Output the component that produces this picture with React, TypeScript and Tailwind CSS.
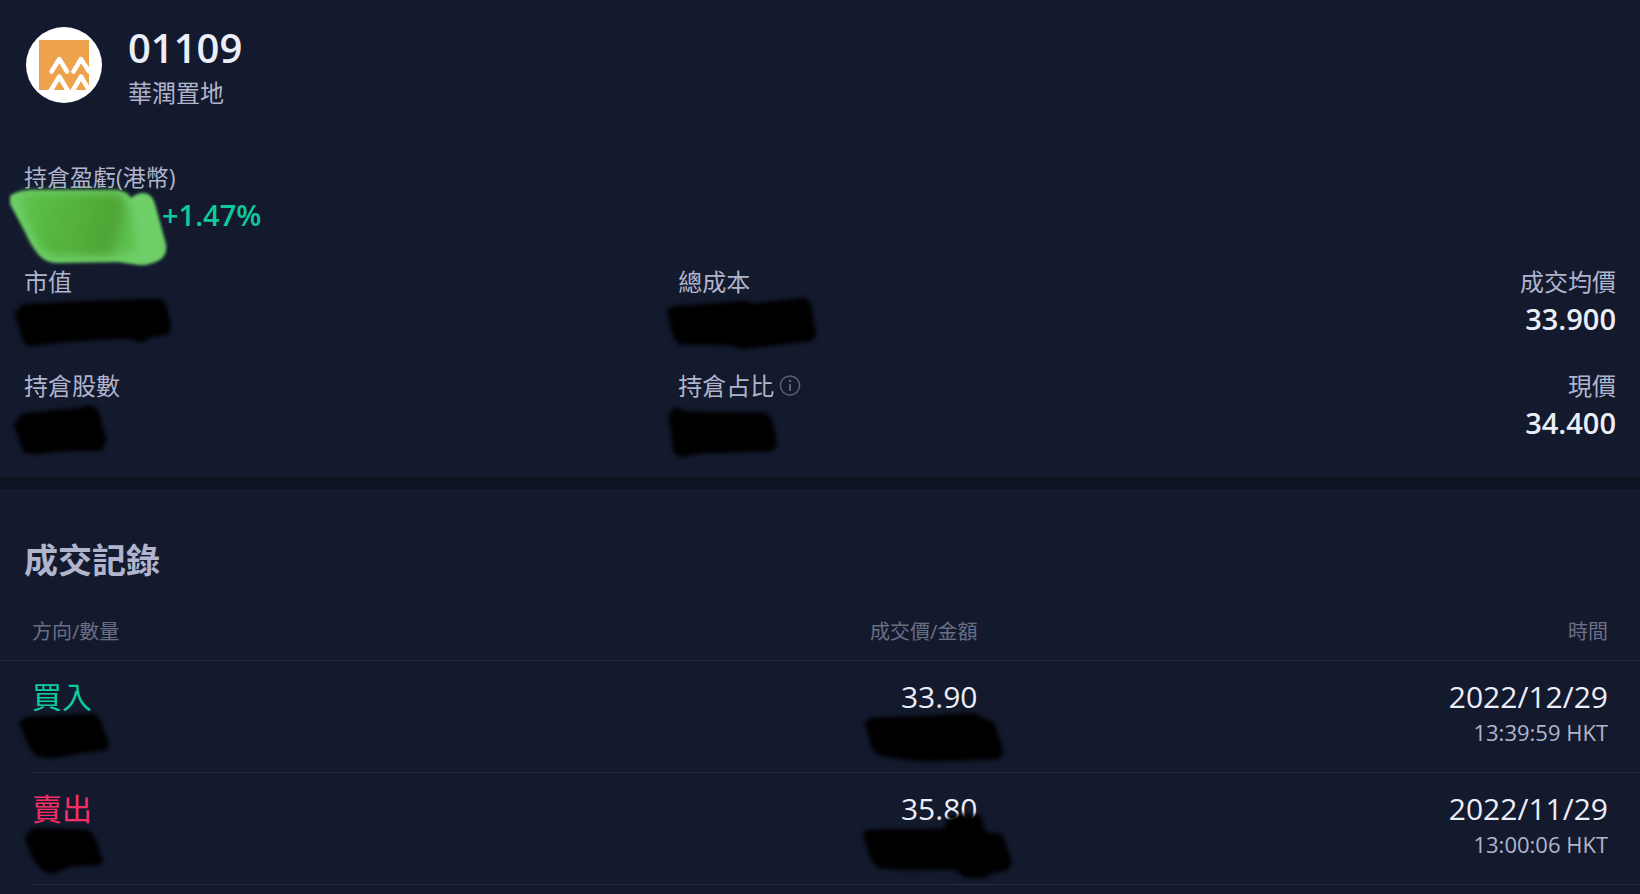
import type { ReactNode } from 'react'

const trades = [
  {
    side: '買入',
    color: 'text-[#0ecb9f]',
    price: '33.90',
    date: '2022/12/29',
    time: '13:39:59 HKT',
    quantityMask: '3,23 12,18 79,15 84,21 93,46 90,51 64,54 36,59 20,57 14,49',
    amountMask: '8,23 14,19 72,17 117,14 127,20 136,23 141,36 146,53 142,60 72,62 52,61 22,56 15,49',
  },
  {
    side: '賣出',
    color: 'text-[#f92e66]',
    price: '35.80',
    date: '2022/11/29',
    time: '13:00:06 HKT',
    quantityMask: '9,27 17,17 72,19 78,25 87,51 82,54 54,55 36,63 26,59 17,47',
    amountMask: '6,22 12,19 87,18 92,6 107,3 124,5 128,21 145,24 155,51 150,59 135,62 127,67 107,66 97,58 47,59 22,57 14,49',
  },
]

// Brush stroke that hides a private value
function Scribble({ points }: { points: string }) {
  return (
    <svg className="absolute -left-4 -top-4 overflow-visible blur-[2px]" width="176" height="72" viewBox="0 0 176 72" aria-hidden="true">
      <polygon points={points} fill="#000" stroke="#000" strokeWidth="1" strokeLinejoin="round" />
    </svg>
  )
}

function GreenScribble() {
  return (
    <svg className="absolute -left-4 -top-4 overflow-visible blur-[1.5px]" width="176" height="90" viewBox="0 0 176 90" aria-hidden="true">
      <defs>
        <linearGradient id="green" x1="0" y1="0" x2="1" y2="0.15">
          <stop offset="0" stopColor="#60c553" />
          <stop offset="0.3" stopColor="#57b942" />
          <stop offset="0.6" stopColor="#53ae3a" />
          <stop offset="0.85" stopColor="#4ea435" />
          <stop offset="1" stopColor="#5cbf4c" />
        </linearGradient>
        <filter id="soft" x="-20%" y="-20%" width="140%" height="140%">
          <feGaussianBlur stdDeviation="4" />
        </filter>
      </defs>
      <path d="M2 17Q8 12 22 11H110Q120 13 123 19Q132 12 140 15Q145 18 147 25L158 65Q160 77 150 82Q140 87 130 86L110 83L52 84Q38 85 30 75Q22 65 17 53L2 25Z" fill="#6ecf69" />
      <path d="M10 18Q16 14 24 14H108Q116 17 120 26L128 62Q128 74 118 75L106 77H48Q36 76 31 67L20 46Z" fill="url(#green)" filter="url(#soft)" />
    </svg>
  )
}

function Logo() {
  return (
    <svg className="mt-1 shrink-0" width="76" height="76" viewBox="0 0 76 76" role="img" aria-label="華潤置地">
      <defs>
        <clipPath id="square">
          <rect x="13" y="13" width="50" height="50" />
        </clipPath>
      </defs>
      <circle cx="38" cy="38" r="38" fill="#fff" />
      <rect x="13" y="13" width="50" height="50" fill="#eda24b" />
      <g clipPath="url(#square)" fill="none" stroke="#fff" strokeWidth="4.5" strokeLinecap="round" strokeLinejoin="round">
        <path d="M25.5 44.5L33.3 32L41 44.5" />
        <path d="M47.5 44.5L55 32L63 44.5" />
        <path d="M24.5 64L33.3 49.5L42 64" />
        <path d="M46.5 64L55 49.5L63.5 64" />
      </g>
    </svg>
  )
}

function InfoIcon() {
  return (
    <svg width="22" height="22" viewBox="0 0 22 22" fill="none" stroke="#5c606f" strokeWidth="1.5" aria-hidden="true">
      <circle cx="11" cy="10.5" r="9.6" />
      <path d="M11 9V16" strokeWidth="2" />
      <circle cx="11" cy="6" r="1.3" fill="#5c606f" stroke="none" />
    </svg>
  )
}

function Stat({ label, children, align = '' }: { label: ReactNode; children: ReactNode; align?: string }) {
  return (
    <div className={align}>
      <dt className="text-2xl leading-9">{label}</dt>
      <dd className="relative h-[38px] text-[29px] leading-[38px] font-semibold text-[#eceef8]">{children}</dd>
    </div>
  )
}

export default function App() {
  return (
    <main className="min-h-screen overflow-hidden bg-[#141a2e] font-['Open_Sans','Noto_Sans_CJK_TC',sans-serif] text-[#b0b4cc]">
      <section className="border-b-12 border-[#0d1321] px-6 pt-[23px] pb-[35px]">
        <header className="flex items-start gap-[26px] pl-0.5">
          <Logo />
          <div>
            <h1 className="text-[40px] leading-[50px] font-semibold text-[#eceef8]">01109</h1>
            <p className="text-2xl leading-10">華潤置地</p>
          </div>
        </header>

        <dl className="mt-[46px]">
          <dt className="text-[23px] leading-9">持倉盈虧(港幣)</dt>
          <dd className="relative h-[38px] pl-[138px] text-[29px] leading-10 font-semibold text-[#0ecb9f]">
            +1.47%
            <GreenScribble />
          </dd>
        </dl>

        <dl className="mt-[31px] grid grid-cols-[41.1%_1fr_auto] gap-y-[30px]">
          <Stat label="市值">
            <Scribble points="7,29 14,21 22,20 92,17 152,15 157,19 163,42 160,50 142,53 134,58 128,57 120,54 52,58 22,62 16,59" />
          </Stat>
          <Stat label="總成本">
            <Scribble points="5,27 10,23 83,17 90,20 143,14 148,18 154,52 148,57 78,65 68,61 18,60 12,54" />
          </Stat>
          <Stat label="成交均價" align="text-right">33.900</Stat>
          <Stat label="持倉股數">
            <Scribble points="6,37 14,26 72,20 82,17 90,22 98,52 94,62 52,63 27,66 16,64" />
          </Stat>
          <Stat
            label={
              <span className="flex items-center gap-[5px]">
                持倉占比
                <button type="button" aria-label="持倉占比說明">
                  <InfoIcon />
                </button>
              </span>
            }
          >
            <Scribble points="7,27 13,19 23,24 103,25 110,32 115,57 110,63 38,65 18,69 12,64" />
          </Stat>
          <Stat label="現價" align="text-right">34.400</Stat>
        </dl>
      </section>

      <section className="pt-[47px]">
        <h2 className="px-6 text-[34px] leading-[48px] font-bold">成交記錄</h2>
        <table className="mt-5 w-full table-fixed border-separate border-spacing-0">
          <thead className="text-xl leading-[56px] text-[#6b6f84]">
            <tr>
              <th className="w-[35%] border-b border-[#252a3e] pl-8 text-left font-normal">方向/數量</th>
              <th className="border-b border-[#252a3e] text-right font-normal">成交價/金額</th>
              <th className="w-[40.4%] border-b border-[#252a3e] pr-8 text-right font-normal">時間</th>
            </tr>
          </thead>
          <tbody className="text-[30px] leading-9 text-[#eceef8]">
            {trades.map((trade) => (
              <tr key={trade.date}>
                <td className="p-0">
                  <div className="ml-8 h-28 border-b border-[#252a3e] pt-[18px]">
                    <div className={trade.color}>{trade.side}</div>
                    <div className="relative h-9">
                      <Scribble points={trade.quantityMask} />
                    </div>
                  </div>
                </td>
                <td className="p-0 text-right">
                  <div className="flex h-28 flex-col items-end border-b border-[#252a3e] pt-[18px]">
                    <div>{trade.price}</div>
                    <div className="relative h-9 w-[104px]">
                      <Scribble points={trade.amountMask} />
                    </div>
                  </div>
                </td>
                <td className="p-0 text-right">
                  <div className="h-28 border-b border-[#252a3e] pt-[18px] pr-8">
                    <div>{trade.date}</div>
                    <div className="text-[22px] leading-[34px] text-[#b0b4cc]">{trade.time}</div>
                  </div>
                </td>
              </tr>
            ))}
          </tbody>
        </table>
      </section>
    </main>
  )
}
